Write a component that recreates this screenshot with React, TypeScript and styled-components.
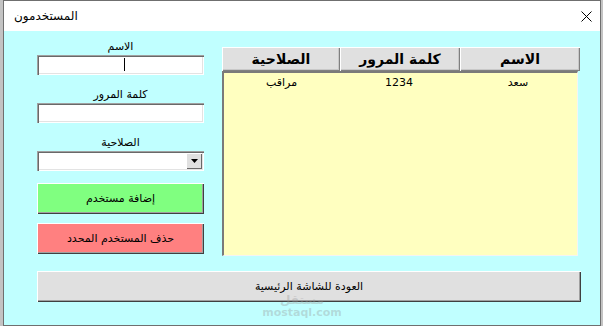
import React from "react";
import styled, { createGlobalStyle } from "styled-components";

const Global = createGlobalStyle`
  html, body { margin: 0; padding: 0; background: #c3c3c3; }
  * { box-sizing: border-box; }
`;

const FONT = `"DejaVu Sans", "Noto Sans", sans-serif`;

const Frame = styled.div`
  position: relative;
  width: 603px;
  height: 326px;
  padding-left: 3px;
  display: flex;
  background: #c3c3c3;
  font-family: ${FONT};
  overflow: hidden;
`;

const Win = styled.div`
  width: 598px;
  height: 326px;
  border: 1px solid #6f6f6f;
  display: flex;
  flex-direction: column;
`;

const TitleBar = styled.div`
  height: 30px;
  flex: none;
  background: #ffffff;
  display: flex;
  align-items: center;
  justify-content: space-between;
  padding: 0 8px 0 10px;
`;

const Title = styled.span`
  font-size: 12px;
  color: #000;
`;

const Client = styled.div`
  flex: 1;
  background: #c0ffff;
  padding: 8px 0 0 33px;
  display: flex;
  flex-direction: column;
`;

const TopRow = styled.div`
  display: flex;
  align-items: flex-start;
  gap: 18px;
`;

const Form = styled.div`
  width: 167px;
  display: flex;
  flex-direction: column;
`;

const Label = styled.div<{ $gap?: number }>`
  height: 16px;
  margin-top: ${(p) => p.$gap ?? 0}px;
  text-align: center;
  font-size: 11px;
  line-height: 16px;
  color: #000;
  direction: rtl;
`;

const sunken = `
  background: #ffffff;
  box-shadow: inset 1px 1px #a0a0a0, inset 2px 2px #696969, inset -1px -1px #ffffff, inset -2px -2px #e3e3e3;
`;

const TextBox = styled.div`
  position: relative;
  height: 20px;
  ${sunken}
`;

const Caret = styled.span`
  position: absolute;
  left: 87px;
  top: 3px;
  width: 1px;
  height: 13px;
  background: #000;
`;

const Combo = styled.div`
  height: 20px;
  ${sunken}
  display: flex;
  justify-content: flex-end;
  padding: 2px 2px 2px 2px;
`;

const DropBtn = styled.div`
  width: 16px;
  height: 16px;
  background: #e0e0e0;
  box-shadow: inset 1px 1px #ffffff, inset -1px -1px #696969;
  display: flex;
  align-items: center;
  justify-content: center;
`;

const raised = `
  border: none;
  box-shadow: inset 1px 1px #ffffff, inset -1px -1px #404040, inset -2px -2px #a0a0a0;
`;

const Button = styled.div<{ $bg: string; $gap: number; $w?: number }>`
  height: 31px;
  ${(p) => (p.$w ? `width: ${p.$w}px;` : "")}
  margin-top: ${(p) => p.$gap}px;
  background: ${(p) => p.$bg};
  ${raised}
  display: flex;
  align-items: center;
  justify-content: center;
  font-size: 11px;
  line-height: 13px;
  color: #000;
  direction: rtl;
`;

const List = styled.div`
  margin-top: 8px;
  width: 358px;
  display: flex;
  flex-direction: column;
`;

const Header = styled.div`
  direction: rtl;
  display: grid;
  grid-template-columns: 120px 120px 118px;
  height: 24px;
`;

const HeadCell = styled.div`
  background: #e0e0e0;
  box-shadow: inset 1px 1px #ffffff, inset -1px -1px #808080, inset -2px -2px #c8c8c8;
  display: flex;
  align-items: center;
  justify-content: center;
  font-size: 14px;
  font-weight: bold;
  color: #000;
`;

const Body = styled.div`
  width: 356px;
  height: 185px;
  background: #ffffc0;
  border-top: 2px solid #7a7a7a;
  border-left: 2px solid #7a7a7a;
  border-right: 1px solid #f4f4f4;
  border-bottom: 1px solid #f4f4f4;
`;

const Row = styled.div`
  direction: rtl;
  display: grid;
  grid-template-columns: 118px 120px 115px;
  height: 18px;
  align-items: center;
  font-size: 11px;
  color: #000;
`;

const Cell = styled.div`
  text-align: center;
`;

const Watermark = styled.div`
  position: absolute;
  left: 262px;
  top: 293px;
  width: 80px;
  display: flex;
  flex-direction: column;
  align-items: center;
  color: rgba(150, 150, 150, 0.35);
  font-family: ${FONT};
  pointer-events: none;
`;

const WmLogo = styled.span`
  font-size: 12px;
  font-weight: bold;
  line-height: 14px;
`;

const WmSite = styled.span`
  font-size: 11px;
  font-weight: bold;
  line-height: 12px;
`;

export default function App() {
  return (
    <>
      <Global />
      <Frame>
        <Win>
          <TitleBar>
            <Title dir="rtl">المستخدمون</Title>
            <svg width="11" height="11" viewBox="0 0 11 11">
              <path d="M0.5 0.5 L10.5 10.5 M10.5 0.5 L0.5 10.5" stroke="#000" strokeWidth="1" fill="none" />
            </svg>
          </TitleBar>
          <Client>
            <TopRow>
              <Form>
                <Label>الاسم</Label>
                <TextBox>
                  <Caret />
                </TextBox>
                <Label $gap={12}>كلمة المرور</Label>
                <TextBox />
                <Label $gap={12}>الصلاحية</Label>
                <Combo>
                  <DropBtn>
                    <svg width="7" height="4" viewBox="0 0 7 4">
                      <path d="M0 0 H7 L3.5 4 Z" fill="#000" />
                    </svg>
                  </DropBtn>
                </Combo>
                <Button $bg="#80ff80" $gap={12}>إضافة مستخدم</Button>
                <Button $bg="#ff8080" $gap={9}>حذف المستخدم المحدد</Button>
              </Form>
              <List>
                <Header>
                  <HeadCell>الاسم</HeadCell>
                  <HeadCell>كلمة المرور</HeadCell>
                  <HeadCell>الصلاحية</HeadCell>
                </Header>
                <Body>
                  <Row>
                    <Cell>سعد</Cell>
                    <Cell>1234</Cell>
                    <Cell>مراقب</Cell>
                  </Row>
                </Body>
              </List>
            </TopRow>
            <Button $bg="#e0e0e0" $gap={15} $w={544}>العودة للشاشة الرئيسية</Button>
          </Client>
        </Win>
        <Watermark>
          <WmLogo>مستقل</WmLogo>
          <WmSite>mostaql.com</WmSite>
        </Watermark>
      </Frame>
    </>
  );
}
